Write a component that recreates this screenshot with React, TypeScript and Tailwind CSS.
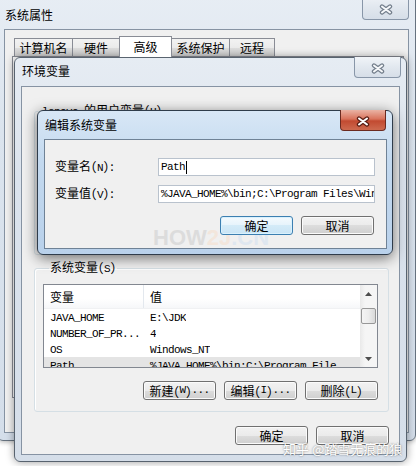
import React from "react";

const rows = [
  { k: "JAVA_HOME", v: "E:\\JDK" },
  { k: "NUMBER_OF_PR...", v: "4" },
  { k: "OS", v: "Windows_NT" },
  { k: "Path", v: "%JAVA_HOME%\\bin;C:\\Program File...", sel: true },
];

const tabs = [
  { label: "计算机名", w: "w-[59px]" },
  { label: "硬件", w: "w-[48px]" },
  { label: "高级", w: "w-[53px]", sel: true },
  { label: "系统保护", w: "w-[59px]" },
  { label: "远程", w: "w-[46px]" },
];

function XGlyph({ active }: { active?: boolean }) {
  return (
    <svg width="14" height="11" viewBox="0 0 14 11">
      <path
        d="M3 2.5 L11 8.5 M11 2.5 L3 8.5"
        stroke={active ? "#5a1e14" : "#737e8b"}
        strokeWidth="4.4"
        strokeLinecap="round"
        fill="none"
      />
      <path
        d="M3 2.5 L11 8.5 M11 2.5 L3 8.5"
        stroke={active ? "#ffffff" : "#f6f8fa"}
        strokeWidth="2"
        strokeLinecap="round"
        fill="none"
      />
    </svg>
  );
}

function CloseBtn({ active, className }: { active?: boolean; className: string }) {
  return (
    <div
      className={`absolute flex items-center justify-center rounded-b-[4px] border border-t-0 pt-[2px] ${className} ${
        active
          ? "border-[#6b2a20] bg-[linear-gradient(180deg,#eab3a4_0%,#d9735c_45%,#c24a31_55%,#cd6a4f_100%)]"
          : "border-[#8896a8] bg-[linear-gradient(180deg,#f1f4f8_0%,#e2e8ef_50%,#d6dee8_100%)]"
      }`}
    >
      <XGlyph active={active} />
    </div>
  );
}

function Btn({ children, focus }: { children: React.ReactNode; focus?: boolean }) {
  return (
    <div
      className={`flex h-[19px] w-[73px] items-center justify-center rounded-[3px] border text-[12px] leading-none ${
        focus
          ? "border-[#3c7fb1] bg-[linear-gradient(180deg,#f4fafe_0%,#e6f3fb_50%,#d4ebf8_50%,#c9e4f5_100%)] shadow-[inset_0_0_0_1px_#d9f1fd]"
          : "border-[#707070] bg-[linear-gradient(180deg,#f2f2f2_0%,#ebebeb_50%,#dddddd_50%,#cfcfcf_100%)] shadow-[inset_0_0_0_1px_#fbfbfb]"
      }`}
    >
      {children}
    </div>
  );
}

function Mono({ children }: { children: React.ReactNode }) {
  return <span className="font-['Liberation_Mono',monospace] text-[11px] tracking-[-0.6px]">{children}</span>;
}

export default function App() {
  return (
    <div className="relative h-[466px] w-[416px] overflow-hidden bg-white font-['Noto_Sans_Mono_CJK_SC','Liberation_Mono','Noto_Sans_CJK_SC',monospace] text-[12px] leading-[14px] text-black">
      {/* 系统属性 */}
      <div className="absolute left-[-3px] top-[-6px] flex h-[447px] w-[419px] flex-col rounded-[6px] border border-[#66727f] bg-[linear-gradient(180deg,#e7edf4_0%,#dbe4ee_30%,#d4deea_100%)] shadow-[0_1px_5px_rgba(0,0,0,0.3)]">
        <div className="h-[34px] pl-[7px] pt-[13px]">系统属性</div>
        <CloseBtn className="right-[6px] top-[-1px] h-[26px] w-[47px] pt-[6px]" />
        <div className="ml-[6px] mr-[6px] mb-[7px] flex-1 border border-[#8693a3] bg-[#f0f0f0] pl-[7px] pr-[4px] pt-[6px]">
          <div className="flex h-[20px] items-end pl-[2px]">
            {tabs.map((t, i) => (
              <div
                key={t.label}
                className={`flex items-center justify-center border border-b-0 border-[#898c95] ${t.w} ${
                  i > 0 ? "-ml-px" : ""
                } ${
                  t.sel
                    ? "relative z-10 -mb-px h-[21px] bg-white"
                    : "h-[18px] bg-[linear-gradient(180deg,#f2f2f2_0%,#ebebeb_50%,#dddddd_50%,#cfcfcf_100%)]"
                }`}
              >
                {t.label}
              </div>
            ))}
          </div>
          <div className="h-[342px] border border-[#898c95] bg-white" />
        </div>
      </div>

      {/* 环境变量 */}
      <div className="absolute left-[14px] top-[57px] flex h-[405px] w-[393px] flex-col rounded-[6px] border border-[#58636f] bg-[linear-gradient(180deg,#e6ecf3_0%,#dbe3ed_30%,#d5dee9_100%)] shadow-[0_0_9px_rgba(0,0,0,0.4)]">
        <div className="h-[28px] pl-[7px] pt-[6px]">环境变量</div>
        <CloseBtn className="right-[5px] top-[-1px] h-[21px] w-[47px]" />
        <div className="mx-[6px] mb-[6px] flex flex-1 flex-col border border-[#8693a3] bg-[#f0f0f0] pl-[12px] pr-[10px] pt-[16px]">
          <fieldset className="h-[152px] rounded-[3px] border border-[#d5dfe5]">
            <legend className="ml-[6px] px-[1px] leading-[14px]">
              <Mono>lenovo </Mono>的用户变量(<Mono>U</Mono>)
            </legend>
          </fieldset>
          <fieldset className="mt-[5px] rounded-[3px] border border-[#d5dfe5] pb-[11px] pl-[8px] pr-[10px] pt-[8px] shadow-[inset_1px_1px_0_#ffffff]">
            <legend className="ml-[6px] px-[1px] leading-[14px]">
              系统变量(<Mono>S</Mono>)
            </legend>
            <div className="flex h-[84px] overflow-hidden border border-[#828790] bg-white">
              <div className="flex-1">
                <div className="flex h-[24px] items-center border-b border-[#f0f1f3] bg-[linear-gradient(180deg,#ffffff_0%,#ffffff_60%,#f6f7f9_100%)]">
                  <div className="flex h-full w-[100px] items-center border-r border-[#e3e8ee] pl-[6px]">变量</div>
                  <div className="pl-[6px]">值</div>
                </div>
                {rows.map((r) => (
                  <div key={r.k} className={`flex h-[16px] items-center whitespace-nowrap ${r.sel ? "bg-[#e4e4e4]" : ""}`}>
                    <div className="w-[100px] pl-[6px]">
                      <Mono>{r.k}</Mono>
                    </div>
                    <div className="overflow-hidden pl-[6px]">
                      <Mono>{r.v}</Mono>
                    </div>
                  </div>
                ))}
              </div>
              <div className="flex w-[17px] flex-col bg-[linear-gradient(90deg,#e9e9e9_0%,#f5f5f5_30%,#f5f5f5_100%)]">
                <div className="flex h-[17px] items-center justify-center">
                  <svg width="7" height="4" viewBox="0 0 7 4">
                    <path d="M0 4 L3.5 0 L7 4 Z" fill="#4d4d4d" />
                  </svg>
                </div>
                <div className="mx-[1px] mt-[6px] h-[16px] rounded-[2px] border border-[#979797] bg-[linear-gradient(90deg,#f4f4f4_0%,#ececec_50%,#d9d9d9_100%)]" />
                <div className="flex-1" />
                <div className="flex h-[17px] items-center justify-center">
                  <svg width="7" height="4" viewBox="0 0 7 4">
                    <path d="M0 0 L7 0 L3.5 4 Z" fill="#4d4d4d" />
                  </svg>
                </div>
              </div>
            </div>
            <div className="mt-[13px] flex justify-end gap-[8px]">
              <Btn>
                新建(<Mono>W</Mono>)<Mono>...</Mono>
              </Btn>
              <Btn>
                编辑(<Mono>I</Mono>)<Mono>...</Mono>
              </Btn>
              <Btn>
                删除(<Mono>L</Mono>)
              </Btn>
            </div>
          </fieldset>
          <div className="mt-[14px] flex justify-end gap-[8px]">
            <Btn>确定</Btn>
            <Btn>取消</Btn>
          </div>
        </div>
      </div>

      {/* 编辑系统变量 */}
      <div className="absolute left-[37px] top-[110px] flex h-[145px] w-[356px] flex-col rounded-[6px] border border-[#2f3c4b] bg-[linear-gradient(180deg,#d8e7f6_0%,#c3d9ef_35%,#b9d1eb_100%)] shadow-[0_3px_14px_rgba(0,0,0,0.55)]">
        <div className="h-[28px] pl-[7px] pt-[7px]">编辑系统变量</div>
        <CloseBtn active className="right-[6px] top-[-1px] h-[21px] w-[46px]" />
        <div className="relative ml-[6px] mr-[5px] mb-[5px] flex-1 border border-[#6f8296] bg-[#f0f0f0] pl-[10px] pr-[11px] pt-[18px]">
          <div className="absolute left-[108px] top-[86px] whitespace-nowrap font-['Liberation_Sans',sans-serif] text-[22px] font-bold leading-[24px]">
            <span className="text-[#dcdcdc]">HOW</span>
            <span className="text-[#f3e6dc]">2J</span>
            <span className="text-[#dfe7f0]">.CN</span>
          </div>
          <div className="flex h-[18px] items-center">
            <div className="w-[103px]">
              变量名(<Mono>N</Mono>):
            </div>
            <div className="flex h-[18px] flex-1 items-center border border-[#b9c2cd] bg-white pl-[2px]">
              <Mono>Path</Mono>
              <div className="ml-[1px] h-[13px] w-px bg-black" />
            </div>
          </div>
          <div className="mt-[9px] flex h-[18px] items-center">
            <div className="w-[103px]">
              变量值(<Mono>V</Mono>):
            </div>
            <div className="flex h-[18px] flex-1 items-center overflow-hidden whitespace-nowrap border border-[#b9c2cd] bg-white pl-[2px]">
              <Mono>%JAVA_HOME%\bin;C:\Program Files\Windows</Mono>
            </div>
          </div>
          <div className="relative mt-[13px] flex justify-end gap-[8px] pr-[1px]">
            <Btn focus>确定</Btn>
            <Btn>取消</Btn>
          </div>
        </div>
      </div>

      <div className="absolute left-[283px] top-[441px] whitespace-nowrap font-['Noto_Sans_CJK_SC',sans-serif] text-[13px] leading-[16px] text-white [text-shadow:0_0_2px_rgba(0,0,0,0.55)]">
        知乎 @踏雪无痕的狼
      </div>
    </div>
  );
}
